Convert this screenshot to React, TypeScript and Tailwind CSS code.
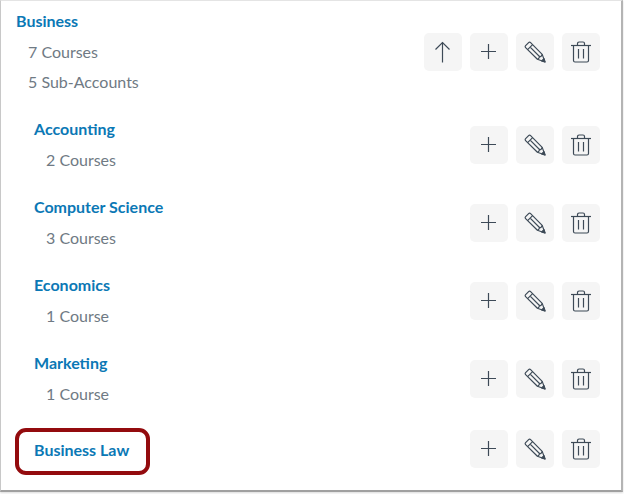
import { ReactNode } from "react";

const ArrowUp = () => (
  <svg width="20" height="24" viewBox="0 0 20 24" fill="none" stroke="#3d4a57" strokeWidth="1.2">
    <path d="M9.5 2.5V22.5" />
    <path d="M2.5 9.5L9.5 2.5L16.5 9.5" />
  </svg>
);

const Plus = () => (
  <svg width="20" height="20" viewBox="0 0 20 20" fill="none" stroke="#3d4a57" strokeWidth="1.2">
    <path d="M9.5 2V17M2 9.5H17" />
  </svg>
);

const Pencil = () => (
  <svg width="22" height="22" viewBox="0 0 22 22" fill="none" stroke="#3d4a57" strokeWidth="1.2" strokeLinejoin="round">
    <path d="M1.6 4.6L4.6 1.6C5.2 1 6 1 6.6 1.6L18.2 13.4L21 21L13.4 18.2L1.6 6.6C1 6 1 5.2 1.6 4.6Z" />
    <path d="M3.6 8.6L8.6 3.6" />
    <path d="M6.4 6.4L16 16" />
    <path d="M13.4 18.2C14.6 17.8 15.2 17.2 15.4 16C16.6 15.8 17.8 15 18.2 13.4" />
    <path d="M17.6 20L20 17.6L21 21Z" fill="#3d4a57" />
  </svg>
);

const Trash = () => (
  <svg width="20" height="22" viewBox="0 0 20 22" fill="none" stroke="#3d4a57" strokeWidth="1.2" strokeLinejoin="round">
    <path d="M0 4.5H20" />
    <path d="M6.5 4.5V2.6C6.5 1.7 7.2 1 8 1H12C12.8 1 13.5 1.7 13.5 2.6V4.5" />
    <path d="M2.5 4.5V19.5C2.5 20.4 3.2 21 4 21H16C16.8 21 17.5 20.4 17.5 19.5V4.5" />
    <path d="M7.5 8V17.5M12.5 8V17.5" />
  </svg>
);

function IconButton({ children }: { children: ReactNode }) {
  return (
    <button className="flex h-[38px] w-[38px] items-center justify-center rounded-[5px] bg-[#f5f5f5]">
      {children}
    </button>
  );
}

type RowProps = {
  title: string;
  details?: string[];
  child?: boolean;
  moveUp?: boolean;
  className?: string;
};

function AccountRow({ title, details = [], child, moveUp, className }: RowProps) {
  return (
    <div className={`flex items-center justify-between ${child ? "pl-[33px]" : "pl-[15px]"} ${className ?? ""}`}>
      <div className={details.length ? "" : "pt-[2px]"}>
        <a
          className={`block text-base font-bold text-[#0b78b5] ${
            details.length ? "mb-[2px] leading-[28px]" : "leading-[30px]"
          }`}
        >
          {title}
        </a>
        {details.map((d) => (
          <p key={d} className="pl-3 text-base leading-[30px] text-[#6f7a84]">
            {d}
          </p>
        ))}
      </div>
      <div className="flex gap-2">
        {moveUp && (
          <IconButton>
            <ArrowUp />
          </IconButton>
        )}
        <IconButton>
          <Plus />
        </IconButton>
        <IconButton>
          <Pencil />
        </IconButton>
        <IconButton>
          <Trash />
        </IconButton>
      </div>
    </div>
  );
}

export default function App() {
  return (
    <div className="h-[494px] w-[624px] bg-white font-['Lato',sans-serif]">
      <div className="relative h-[492px] w-[623px] border border-b-2 border-r-2 border-l-[#c8c8c8] border-t-[#e4e4e4] border-r-[#b4b4b4] border-b-[#a0a0a0] pr-[21px] pt-[6px] shadow-[0_1px_2px_rgba(0,0,0,0.15)]">
        <AccountRow title="Business" details={["7 Courses", "5 Sub-Accounts"]} moveUp />
        <div className="mt-[18px] flex flex-col gap-[18px]">
          <AccountRow child title="Accounting" details={["2 Courses"]} />
          <AccountRow child title="Computer Science" details={["3 Courses"]} />
          <AccountRow child title="Economics" details={["1 Course"]} />
          <AccountRow child title="Marketing" details={["1 Course"]} />
        </div>
        <AccountRow child title="Business Law" className="mt-[21px]" />
        <div className="absolute left-[14px] top-[427px] h-[47px] w-[135px] rounded-[11px] border-4 border-[#930b0e]" />
      </div>
    </div>
  );
}
